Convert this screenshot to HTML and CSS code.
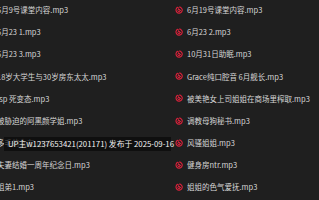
FILE: index.html
```html
<!DOCTYPE html>
<html lang="zh-CN">
<head>
<meta charset="utf-8">
<link rel="stylesheet" href="styles.css">
</head>
<body>
<div class="view">
  <ul class="files">
    <li class="file"><svg class="ico" viewBox="0 0 16 16"><use href="#ne"/></svg><span>6月9号课堂内容.mp3</span></li>
    <li class="file"><svg class="ico" viewBox="0 0 16 16"><use href="#ne"/></svg><span>6月19号课堂内容.mp3</span></li>
    <li class="file"><svg class="ico" viewBox="0 0 16 16"><use href="#ne"/></svg><span>6月23 1.mp3</span></li>
    <li class="file"><svg class="ico" viewBox="0 0 16 16"><use href="#ne"/></svg><span>6月23 2.mp3</span></li>
    <li class="file"><svg class="ico" viewBox="0 0 16 16"><use href="#ne"/></svg><span>6月23 3.mp3</span></li>
    <li class="file"><svg class="ico" viewBox="0 0 16 16"><use href="#ne"/></svg><span>10月31日助眠.mp3</span></li>
    <li class="file"><svg class="ico" viewBox="0 0 16 16"><use href="#ne"/></svg><span>18岁大学生与30岁房东太太.mp3</span></li>
    <li class="file"><svg class="ico" viewBox="0 0 16 16"><use href="#ne"/></svg><span>Grace纯口腔音 6月舰长.mp3</span></li>
    <li class="file"><svg class="ico" viewBox="0 0 16 16"><use href="#ne"/></svg><span>lsp 死变态.mp3</span></li>
    <li class="file"><svg class="ico" viewBox="0 0 16 16"><use href="#ne"/></svg><span>被美艳女上司姐姐在商场里榨取.mp3</span></li>
    <li class="file"><svg class="ico" viewBox="0 0 16 16"><use href="#ne"/></svg><span>被胁迫的阿黑颜学姐.mp3</span></li>
    <li class="file"><svg class="ico" viewBox="0 0 16 16"><use href="#ne"/></svg><span>调教母狗秘书.mp3</span></li>
    <li class="file"><svg class="ico" viewBox="0 0 16 16"><use href="#ne"/></svg><span>多毛的女友.mp3</span></li>
    <li class="file"><svg class="ico" viewBox="0 0 16 16"><use href="#ne"/></svg><span>风骚姐姐.mp3</span></li>
    <li class="file"><svg class="ico" viewBox="0 0 16 16"><use href="#ne"/></svg><span>夫妻结婚一周年纪念日.mp3</span></li>
    <li class="file"><svg class="ico" viewBox="0 0 16 16"><use href="#ne"/></svg><span>健身房ntr.mp3</span></li>
    <li class="file"><svg class="ico" viewBox="0 0 16 16"><use href="#ne"/></svg><span>姐弟1.mp3</span></li>
    <li class="file"><svg class="ico" viewBox="0 0 16 16"><use href="#ne"/></svg><span>姐姐的色气爱抚.mp3</span></li>
  </ul>
  <div class="mark">UP主w1237653421(201171) 发布于 2025-09-16</div>
</div>
<svg class="defs" width="0" height="0">
  <defs>
    <g id="ne" fill="none" stroke="#e0223c" stroke-linecap="round">
      <path d="M10.6 2.3 A6.2 6.2 0 1 1 5.2 2.6" stroke-width="2.2"/>
      <path d="M9.4 1.6 C7 2.2 6.4 4 7 6" stroke-width="1.8"/>
      <circle cx="8" cy="9" r="2.4" stroke-width="1.9"/>
    </g>
  </defs>
</svg>
</body>
</html>
```

FILE: styles.css
```css
* { box-sizing: border-box; }
html, body {
  margin: 0;
  padding: 0;
  background: #1f1f1f;
  overflow: hidden;
}
body {
  width: 319px;
  height: 200px;
  font-family: "Noto Sans CJK SC", "Noto Sans", sans-serif;
  font-size: 7.5px;
  color: #d6d6d6;
}
.view {
  position: relative;
  width: 319px;
  height: 200px;
  overflow: hidden;
}
.files {
  list-style: none;
  margin: -1.4px 0 0 -20px;
  padding: 0;
  display: grid;
  grid-template-columns: 190px 190px;
  grid-auto-rows: 22.2px;
}
.file {
  display: flex;
  align-items: center;
  gap: 4px;
  padding-left: 5px;
  white-space: nowrap;
  line-height: 1;
}
.ico {
  width: 8px;
  height: 8px;
  flex: none;
}
.defs {
  position: absolute;
  width: 0;
  height: 0;
}
.mark {
  position: absolute;
  left: 4px;
  top: 137px;
  width: 167px;
  height: 14px;
  padding-left: 4px;
  display: flex;
  align-items: center;
  background: rgba(10, 10, 10, 0.72);
  color: #f2f2f2;
  font-size: 7.8px;
  white-space: nowrap;
  line-height: 1;
}
```
